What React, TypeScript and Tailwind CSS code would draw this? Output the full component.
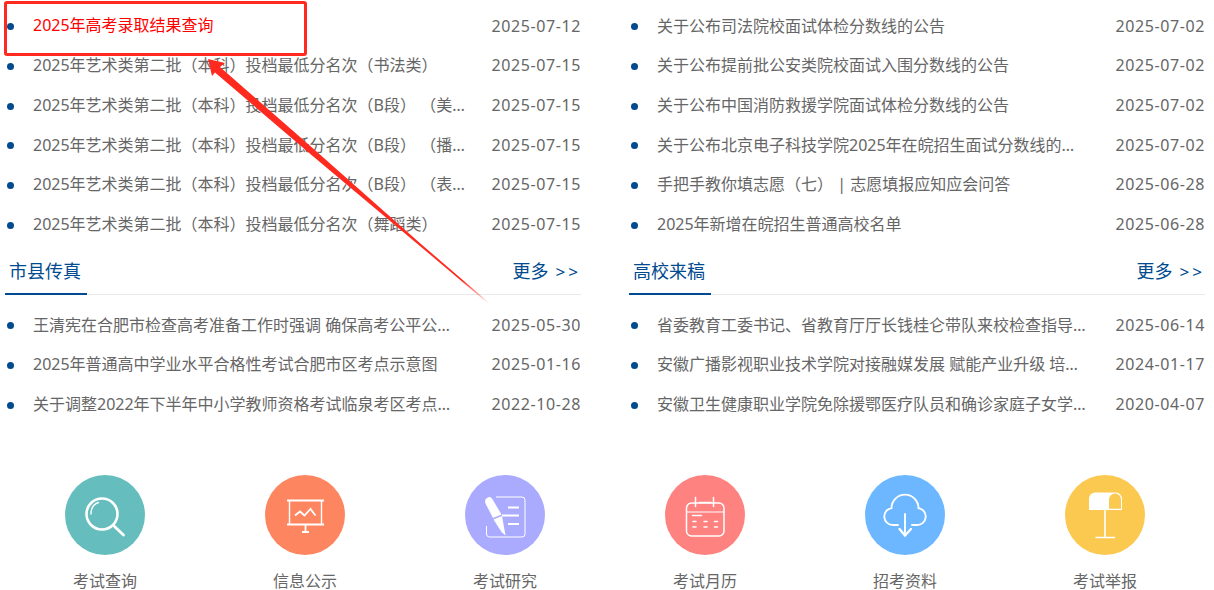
const font = '"Noto Sans", "Noto Sans CJK SC", sans-serif';

const topLeft = [
  ["2025年高考录取结果查询", "2025-07-12"],
  ["2025年艺术类第二批（本科）投档最低分名次（书法类）", "2025-07-15"],
  ["2025年艺术类第二批（本科）投档最低分名次（B段） （美术类）", "2025-07-15"],
  ["2025年艺术类第二批（本科）投档最低分名次（B段） （播音与主持类）", "2025-07-15"],
  ["2025年艺术类第二批（本科）投档最低分名次（B段） （表演类）", "2025-07-15"],
  ["2025年艺术类第二批（本科）投档最低分名次（舞蹈类）", "2025-07-15"],
];
const topRight = [
  ["关于公布司法院校面试体检分数线的公告", "2025-07-02"],
  ["关于公布提前批公安类院校面试入围分数线的公告", "2025-07-02"],
  ["关于公布中国消防救援学院面试体检分数线的公告", "2025-07-02"],
  ["关于公布北京电子科技学院2025年在皖招生面试分数线的公告", "2025-07-02"],
  ["手把手教你填志愿（七） | 志愿填报应知应会问答", "2025-06-28"],
  ["2025年新增在皖招生普通高校名单", "2025-06-28"],
];
const cityNews = [
  ["王清宪在合肥市检查高考准备工作时强调 确保高考公平公正顺利进行", "2025-05-30"],
  ["2025年普通高中学业水平合格性考试合肥市区考点示意图", "2025-01-16"],
  ["关于调整2022年下半年中小学教师资格考试临泉考区考点的通知", "2022-10-28"],
];
const schoolNews = [
  ["省委教育工委书记、省教育厅厅长钱桂仑带队来校检查指导工作", "2025-06-14"],
  ["安徽广播影视职业技术学院对接融媒发展 赋能产业升级 培养新型人才", "2024-01-17"],
  ["安徽卫生健康职业学院免除援鄂医疗队员和确诊家庭子女学费的通知", "2020-04-07"],
];

function NewsList({ rows, first }: { rows: string[][]; first?: boolean }) {
  return (
    <ul>
      {rows.map(([title, date], i) => (
        <li key={title} className="flex items-center h-[39.67px]">
          <span className="w-[7px] h-[7px] rounded-full bg-[#004a8f] ml-[2px] mt-[2px] shrink-0" />
          <span className={`ml-[19px] w-[432.6px] truncate text-[16px] ${first && i === 0 ? "text-[#ff0000] -mt-[2px]" : "text-[#666666]"}`}>
            {title}
          </span>
          <span className="ml-auto text-[16px] text-[#666666] tracking-[0.6px]">{date}</span>
        </li>
      ))}
    </ul>
  );
}

function SectionHead({ title }: { title: string }) {
  return (
    <div className="flex items-center justify-between h-[51px] border-b border-[#e9e9e9] relative">
      <span className="text-[18px] text-[#004a8f] ml-[4px] mt-[5px]">{title}</span>
      <span className="flex items-center text-[18px] text-[#004a8f] mt-[5px]">
        更多
        <span className="ml-[7px] text-[17px] tracking-[3px]">&gt;&gt;</span>
      </span>
      <span className="absolute left-0 bottom-[-1px] w-[82px] h-[2px] bg-[#004a8f]" />
    </div>
  );
}

const iconCls = "w-[80px] h-[80px]";

const SearchIcon = () => (
  <svg viewBox="0 0 80 80" className={iconCls} fill="none" stroke="#fff" strokeLinecap="round">
    <circle cx="37" cy="39" r="15.5" strokeWidth="2.6" />
    <path d="M26 39c0-6 3-10 7.5-11.5" strokeWidth="1.4" />
    <path d="M49 51l9.5 9" strokeWidth="2.8" />
  </svg>
);
const BoardIcon = () => (
  <svg viewBox="0 0 80 80" className={iconCls} fill="none" stroke="#fff">
    <path d="M22 25.5h37M22 49.5h37" strokeWidth="2" />
    <path d="M24.5 25.5v24M56.5 25.5v24" strokeWidth="1.4" />
    <path d="M40.5 50v6.5M37 57h7" strokeWidth="1.8" />
    <path d="M30 40.5l5-4 4.5 4 6-6.5 5 6.5" strokeWidth="1.8" />
  </svg>
);
const PenIcon = () => (
  <svg viewBox="0 0 80 80" className={iconCls} fill="none" stroke="#fff">
    <path d="M31 22h26a3 3 0 0 1 3 3v34a3 3 0 0 1-3 3H24.5a3 3 0 0 1-3-3v-8" strokeWidth="1" />
    <path d="M43 32.5h11M37 40.5h17M43 49h11" strokeWidth="2.2" />
    <path d="M20.5 24.5c2-3 5-3.5 6.5-1l9.5 16-8.5 3.5-7.5-14.5c-.5-1.5-.5-3 0-4z" fill="#fff" stroke="none" />
    <path d="M28.5 44.5l8.5-3.5 3.5 19.5-4-3.5z" fill="#fff" stroke="none" />
  </svg>
);
const CalendarIcon = () => (
  <svg viewBox="0 0 80 80" className={iconCls} fill="none" stroke="#fff" strokeLinecap="round">
    <rect x="21.5" y="28" width="37.5" height="33" rx="5" strokeWidth="1.5" />
    <path d="M22 37h37" strokeWidth="1.2" />
    <path d="M30.5 22.5v9M48.5 22.5v9M34.5 27.5h11.5" strokeWidth="1.5" />
    <path d="M27.5 40.5h9M28 46.5h3M39 46.5h3M49.5 46.5h3M28 52h3M39 52h3M49.5 52h3" strokeWidth="1.5" />
  </svg>
);
const CloudIcon = () => (
  <svg viewBox="0 0 80 80" className={iconCls} fill="none" stroke="#fff" strokeWidth="1.9" strokeLinecap="round">
    <path d="M33 50h-5a8.5 8.5 0 0 1-1.5-16.9A13.5 13.5 0 0 1 53.5 33.1 8.5 8.5 0 0 1 52 50h-5" />
    <path d="M40 39v21" />
    <path d="M34.5 54l5.500 6.5 6-6.5" strokeWidth="2.3" />
  </svg>
);
const MailboxIcon = () => (
  <svg viewBox="0 0 80 80" className={iconCls} fill="none">
    <path d="M24 35V23.5a6 6 0 0 1 6-6h21a6.5 6.5 0 0 1 6 6.500V35z" fill="#fff" />
    <path d="M44 33.800V24.500a6 6 0 0 1 6-6 6 6 0 0 1 6 6v9.300z" fill="#fbc94f" />
    <path d="M40 35v27.5M30.5 62.5H50" stroke="#fff" strokeWidth="1.6" />
  </svg>
);

const shortcuts = [
  { label: "考试查询", bg: "bg-[#66bdbd]", icon: <SearchIcon /> },
  { label: "信息公示", bg: "bg-[#fd8661]", icon: <BoardIcon /> },
  { label: "考试研究", bg: "bg-[#aaabff]", icon: <PenIcon /> },
  { label: "考试月历", bg: "bg-[#fe8280]", icon: <CalendarIcon /> },
  { label: "招考资料", bg: "bg-[#6cb7ff]", icon: <CloudIcon /> },
  { label: "考试举报", bg: "bg-[#fbc94f]", icon: <MailboxIcon /> },
];

export default function App() {
  return (
    <div className="relative w-[1214px] h-[590px] overflow-hidden bg-white pl-[5px] pt-[6px]" style={{ fontFamily: font }}>
      <div className="grid grid-cols-[576px_576px] gap-x-[48px]">
        <div>
          <NewsList rows={topLeft} first />
          <SectionHead title="市县传真" />
          <div className="mt-[10px]">
            <NewsList rows={cityNews} />
          </div>
        </div>
        <div>
          <NewsList rows={topRight} />
          <SectionHead title="高校来稿" />
          <div className="mt-[10px]">
            <NewsList rows={schoolNews} />
          </div>
        </div>
      </div>

      <div className="grid grid-cols-6 w-[1200px] mt-[51px]">
        {shortcuts.map((s) => (
          <div key={s.label} className="flex flex-col items-center">
            <div className={`w-[80px] h-[80px] rounded-full ${s.bg}`}>{s.icon}</div>
            <span className="mt-[15px] text-[16px] leading-[22px] text-[#666666]">{s.label}</span>
          </div>
        ))}
      </div>

      {/* annotation over the screenshot: red box and arrow */}
      <div className="absolute left-[4px] top-[1px] w-[303px] h-[55px] border-[3px] border-[#ff2a1f] rounded-[3px]" />
      <svg className="absolute left-0 top-0 pointer-events-none" width="1214" height="590">
        <defs>
          <linearGradient id="tail" gradientUnits="userSpaceOnUse" x1="400" y1="226" x2="489" y2="303">
            <stop offset="0" stopColor="#ff2a1f" />
            <stop offset="0.7" stopColor="#ff2a1f" />
            <stop offset="1" stopColor="#ff2a1f" stopOpacity="0" />
          </linearGradient>
        </defs>
        <polygon points="208,59 225,63 220,67 314,149.2 420.7,243.8 489,302.5 488,303.5 419.3,245.4 310,153.8 215,72.5 212,76" fill="url(#tail)" />
      </svg>
    </div>
  );
}
